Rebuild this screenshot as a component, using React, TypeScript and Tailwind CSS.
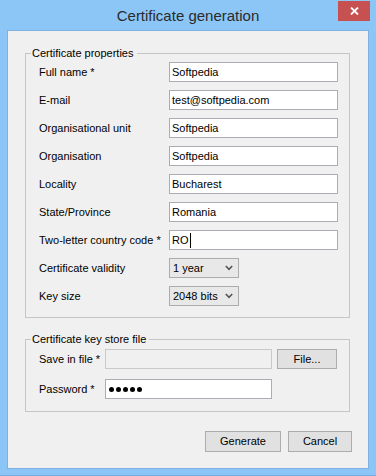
import React from "react";

const font = { fontFamily: '"Liberation Sans", Arial, sans-serif' };

function Label({ children, w }: { children: React.ReactNode; w: string }) {
  return <div className={`${w} shrink-0 text-[11px] leading-[20px] text-black`}>{children}</div>;
}

function TextBox({ value, caret }: { value: string; caret?: boolean }) {
  return (
    <div className="w-[169px] h-[20px] border border-[#abadb3] bg-white flex items-center pl-[2px] text-[11px] text-black">
      <span>{value}</span>
      {caret && <span className="w-[1px] h-[15px] bg-black ml-[1px]" />}
    </div>
  );
}

function Combo({ value }: { value: string }) {
  return (
    <div className="w-[70px] h-[20px] border border-[#acacac] bg-[#e8e8e8] flex items-center justify-between pl-[3px] pr-[5px] text-[11px] text-black">
      <span>{value}</span>
      <svg width="8" height="6" viewBox="0 0 8 6">
        <path d="M0.8 1 L4 4.4 L7.2 1" stroke="#555" strokeWidth="1.6" fill="none" />
      </svg>
    </div>
  );
}

function Button({ children, w }: { children: React.ReactNode; w: string }) {
  return (
    <div className={`${w} h-full border border-[#adadad] bg-[#e1e1e1] flex items-center justify-center text-[11px] text-black`}>
      {children}
    </div>
  );
}

function Row({ label, children }: { label: string; children: React.ReactNode }) {
  return (
    <div className="flex items-center h-[20px]">
      <Label w="w-[130px]">{label}</Label>
      {children}
    </div>
  );
}

export default function App() {
  return (
    <div style={font} className="w-[376px] h-[476px] bg-[#8cc6f7] border-b border-[#76aee3] relative flex flex-col">
      {/* Title bar */}
      <div className="h-[30px] flex items-center justify-center text-[15px] leading-[29px] text-[#2b2b2b]">
        Certificate generation
      </div>
      <div className="absolute top-[1px] left-[338px] w-[32px] h-[20px] bg-[#c75050] flex items-center justify-center">
        <svg width="9" height="8" viewBox="0 0 9 8">
          <path d="M1 0.5 L8 7.5 M8 0.5 L1 7.5" stroke="#fff" strokeWidth="1.8" />
        </svg>
      </div>

      {/* Client area */}
      <div className="ml-[7px] w-[362px] h-[439px] border border-[#7fb2e3] bg-[#f0f0f0] flex flex-col">
        {/* Group 1 */}
        <div className="relative ml-[17px] mt-[22px] w-[325px] h-[265px] border border-[#c6c6c6] pt-[8px] pl-[13px] flex flex-col gap-[8px]">
          <span className="absolute -top-[8px] left-[5px] bg-[#f0f0f0] pl-[1px] pr-[3px] text-[11px] leading-[14px] text-black">
            Certificate properties
          </span>
          <Row label="Full name *"><TextBox value="Softpedia" /></Row>
          <Row label="E-mail"><TextBox value="test@softpedia.com" /></Row>
          <Row label="Organisational unit"><TextBox value="Softpedia" /></Row>
          <Row label="Organisation"><TextBox value="Softpedia" /></Row>
          <Row label="Locality"><TextBox value="Bucharest" /></Row>
          <Row label="State/Province"><TextBox value="Romania" /></Row>
          <Row label="Two-letter country code *"><TextBox value="RO" caret /></Row>
          <Row label="Certificate validity"><Combo value="1 year" /></Row>
          <Row label="Key size"><Combo value="2048 bits" /></Row>
        </div>

        {/* Group 2 */}
        <div className="relative ml-[17px] mt-[21px] w-[325px] h-[73px] border border-[#c6c6c6] pt-[9px] pl-[13px] flex flex-col gap-[10px]">
          <span className="absolute -top-[8px] left-[5px] bg-[#f0f0f0] pl-[1px] pr-[3px] text-[11px] leading-[14px] text-black">
            Certificate key store file
          </span>
          <div className="flex items-center h-[20px]">
            <Label w="w-[66px]">Save in file *</Label>
            <div className="w-[167px] h-[20px] border border-[#c9c9c9] bg-[#f0f0f0]" />
            <div className="ml-[5px] h-[20px] flex">
              <Button w="w-[60px]">File...</Button>
            </div>
          </div>
          <div className="flex items-center h-[20px]">
            <Label w="w-[66px]">Password *</Label>
            <div className="w-[167px] h-[20px] border border-[#abadb3] bg-white flex items-center pl-[3px] gap-[2px]">
              <span className="w-[5px] h-[5px] rounded-full bg-black" />
              <span className="w-[5px] h-[5px] rounded-full bg-black" />
              <span className="w-[5px] h-[5px] rounded-full bg-black" />
              <span className="w-[5px] h-[5px] rounded-full bg-black" />
              <span className="w-[5px] h-[5px] rounded-full bg-black" />
            </div>
          </div>
        </div>

        {/* Buttons */}
        <div className="mt-[19px] h-[21px] flex justify-end gap-[7px] pr-[16px]">
          <Button w="w-[76px]">Generate</Button>
          <Button w="w-[64px]">Cancel</Button>
        </div>
      </div>
    </div>
  );
}
